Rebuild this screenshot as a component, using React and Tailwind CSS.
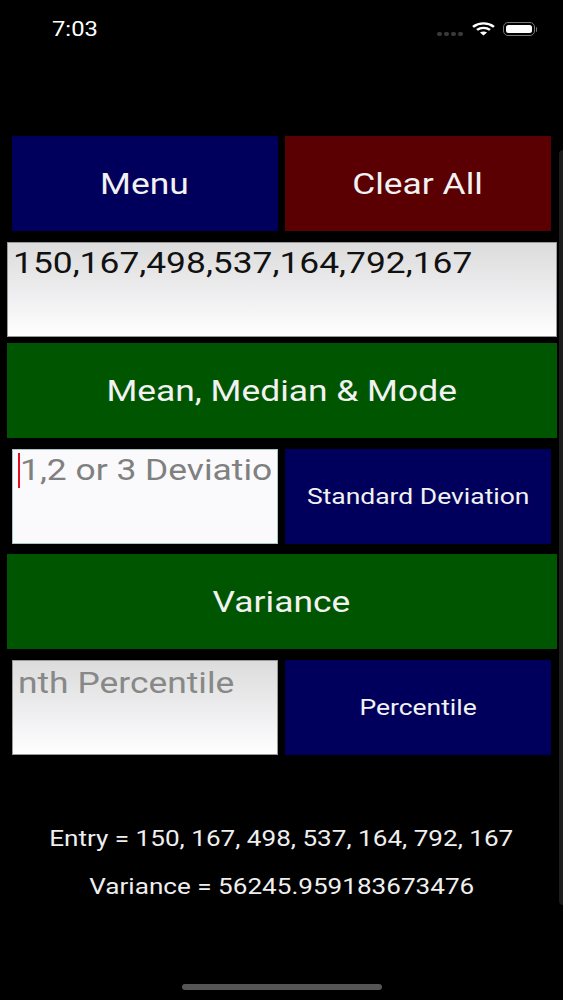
const navy = 'bg-[#00005c]';

// the reference is stretched sideways, so text gets the same stretch
function Wide({ children, left }) {
  return (
    <span className={`inline-block scale-x-[1.22] whitespace-nowrap ${left ? 'origin-left' : ''}`}>{children}</span>
  );
}

function ActionButton({ label, color, size = 'text-[29px]', wide }) {
  return (
    <button
      className={`flex h-[95px] items-center justify-center pt-[2px] text-[#f2f2f2] ${color} ${size} ${wide ? 'w-full' : 'w-[265.5px]'}`}
    >
      <Wide>{label}</Wide>
    </button>
  );
}

function StatusBar() {
  return (
    <div className="flex h-[58px] items-center justify-between pl-[52px] pr-[26px]">
      <span className="pt-[2px] text-[19.5px] text-white">
        <Wide left>7:03</Wide>
      </span>
      <div className="flex items-center">
        <div className="mr-[9px] mt-[10px] flex gap-[2px]">
          {[0, 1, 2, 3].map((i) => (
            <span key={i} className="h-[4px] w-[5px] rounded-full bg-[#3a3a3a]" />
          ))}
        </div>
        <svg width="23" height="14" viewBox="0 0 22 16" preserveAspectRatio="none" className="mr-[8px]">
          <path d="M1 5.5C6.8 0.4 15.2 0.4 21 5.5" fill="none" stroke="white" strokeWidth="2.6" />
          <path d="M4.8 9C8.4 6 13.6 6 17.2 9" fill="none" stroke="white" strokeWidth="2.6" />
          <path d="M11 15.5L7.6 12C9.6 10.4 12.4 10.4 14.4 12Z" fill="white" />
        </svg>
        <div className="h-[14px] w-[32px] rounded-[5px] border border-[#777] p-[2px]">
          <div className="h-full w-full rounded-[2.5px] bg-white" />
        </div>
        <div className="ml-[1px] h-[5px] w-[1.5px] rounded-r-sm bg-[#777]" />
      </div>
    </div>
  );
}

export default function App() {
  return (
    <div className="relative h-[1000px] w-[563px] overflow-hidden bg-black font-['Roboto',sans-serif]">
      <StatusBar />

      <div className="pt-[78px]">
        <div className="flex justify-between pl-[12px] pr-[12.5px]">
          <ActionButton label="Menu" color={navy} />
          <ActionButton label="Clear All" color="bg-[#5a0003]" />
        </div>

        <div className="mx-[6.5px] mt-[11px] h-[95px] border border-[#999] bg-gradient-to-b from-[#dcdcdc] via-[#f0f0f2] via-60% to-white pl-[5px] pt-[1px] text-[29px] leading-[38px] text-[#111]">
          <Wide left>150,167,498,537,164,792,167</Wide>
        </div>

        <div className="mx-[6.5px] mt-[6px]">
          <ActionButton label="Mean, Median & Mode" color="bg-[#005500]" wide />
        </div>

        <div className="mt-[11px] flex justify-between pl-[12px] pr-[12.5px]">
          <div className="relative h-[95px] w-[266px] border border-[#a9c4c4] bg-[#fafafc] pl-[6.5px] pt-[1px] text-[29px] leading-[38px] text-[#808080]">
            <span className="absolute left-[5px] top-[3px] h-[35px] w-[2px] bg-[#e01020]" />
            <div className="w-[253px] overflow-hidden">
              <Wide left>1,2 or 3 Deviation</Wide>
            </div>
          </div>
          <ActionButton label="Standard Deviation" color={navy} size="text-[21.7px]" />
        </div>

        <div className="mx-[6.5px] mt-[10px]">
          <ActionButton label="Variance" color="bg-[#005500]" wide />
        </div>

        <div className="mt-[11px] flex justify-between pl-[12px] pr-[12.5px]">
          <div className="h-[95px] w-[266px] border border-[#999] bg-gradient-to-b from-[#dcdcdc] via-[#f0f0f2] via-60% to-white pl-[5px] pt-[3px] text-[29px] leading-[38px] text-[#888]">
            <Wide left>nth Percentile</Wide>
          </div>
          <ActionButton label="Percentile" color={navy} size="text-[21.7px]" />
        </div>

        <div className="mt-[70px] flex flex-col items-center gap-[20px] text-[21.4px] leading-[28px] text-[#efefef]">
          <p>
            <Wide>Entry = 150, 167, 498, 537, 164, 792, 167</Wide>
          </p>
          <p>
            <Wide>Variance = 56245.959183673476</Wide>
          </p>
        </div>
      </div>

      {/* overlay scrollbar and home indicator */}
      <div className="absolute right-0 top-[150px] h-[755px] w-[4px] rounded-l bg-[#1c1c1c]" />
      <div className="absolute bottom-[10px] left-[182px] h-[6px] w-[200px] rounded-full bg-[#555]" />
    </div>
  );
}
